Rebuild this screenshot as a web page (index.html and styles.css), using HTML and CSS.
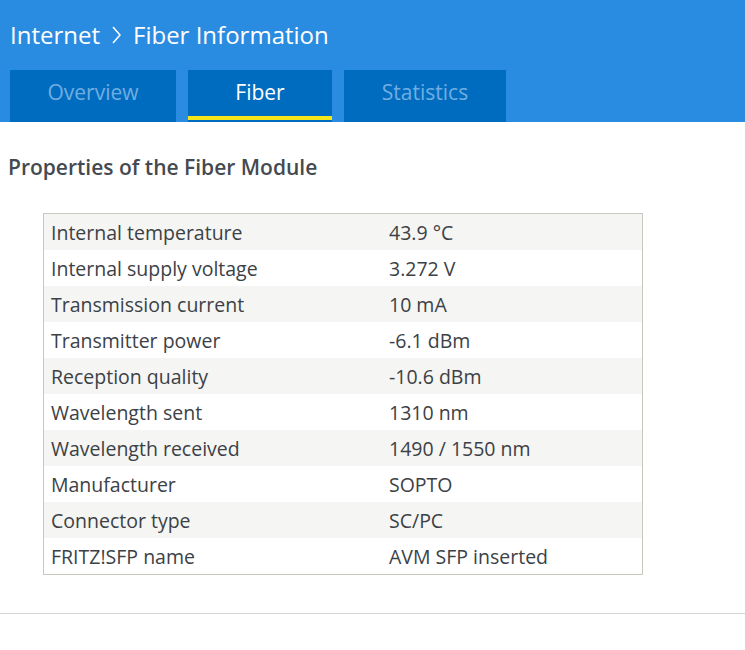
FILE: index.html
```html
<!DOCTYPE html>
<html lang="en">

<head>
  <meta charset="UTF-8">
  <title>Fiber Information</title>
  <link rel="stylesheet" href="styles.css">
</head>

<body>
  <div class="header">
    <h1 class="crumb">
      <span>Internet</span>
      <svg class="chev" width="9" height="18" viewBox="0 0 9 18"><path d="M1 1 L8 9 L1 17" fill="none" stroke="#fff" stroke-width="1.5"/></svg>
      <span>Fiber Information</span>
    </h1>
    <div class="tabs">
      <a class="tab tab-overview">Overview</a>
      <a class="tab tab-fiber active">Fiber</a>
      <a class="tab tab-stats">Statistics</a>
    </div>
  </div>

  <div class="content">
    <h2>Properties of the Fiber Module</h2>
    <table class="props">
      <tr><td class="key">Internal temperature</td><td>43.9 °C</td></tr>
      <tr><td class="key">Internal supply voltage</td><td>3.272 V</td></tr>
      <tr><td class="key">Transmission current</td><td>10 mA</td></tr>
      <tr><td class="key">Transmitter power</td><td>-6.1 dBm</td></tr>
      <tr><td class="key">Reception quality</td><td>-10.6 dBm</td></tr>
      <tr><td class="key">Wavelength sent</td><td>1310 nm</td></tr>
      <tr><td class="key">Wavelength received</td><td>1490 / 1550 nm</td></tr>
      <tr><td class="key">Manufacturer</td><td>SOPTO</td></tr>
      <tr><td class="key">Connector type</td><td>SC/PC</td></tr>
      <tr><td class="key">FRITZ!SFP name</td><td>AVM SFP inserted</td></tr>
    </table>
    <div class="rule"></div>
  </div>
</body>

</html>
```

FILE: styles.css
```css
body {
  margin: 0;
  font-family: "Open Sans", "Noto Sans", sans-serif;
  color: #3c4146;
  background: #fff;
}

.header {
  background-color: #2a8ce0;
  padding: 0 10px;
  height: 122px;
}

.crumb {
  margin: 0;
  height: 70px;
  display: flex;
  align-items: center;
  gap: 12px;
  font-size: 24px;
  font-weight: normal;
  color: #fff;
  padding-bottom: 2px;
  box-sizing: border-box;
}

.chev {
  margin-top: 2px;
}

.tabs {
  display: flex;
  gap: 12px;
}

.tab {
  display: block;
  height: 52px;
  line-height: 44px;
  text-align: center;
  font-size: 21px;
  color: #70aee0;
  background-color: #006cc0;
  box-sizing: border-box;
  cursor: pointer;
}

.tab-overview { width: 166px; }
.tab-fiber { width: 144px; }
.tab-stats { width: 162px; }

.tab.active {
  color: #fff;
  border-bottom: 2px solid #006cc0;
  box-shadow: inset 0 -4px 0 #f5e61a;
}

.content {
  padding: 0 8px;
}

h2 {
  margin: 0;
  padding-top: 31px;
  font-size: 21px;
  font-weight: 600;
  color: #444a50;
  height: 91px;
  box-sizing: border-box;
}

.props {
  margin-left: 35px;
  width: 600px;
  border-collapse: collapse;
  border: 1px solid #c8c8c0;
  font-size: 19.5px;
}

.props tr:nth-child(odd) {
  background-color: #f5f5f3;
}

.props td {
  height: 36px;
  padding: 0 0 0 7px;
}

.props td.key {
  width: 331px;
}

.rule {
  margin: 38px -8px 0;
  border-top: 1px solid #d6d6d6;
}
```
